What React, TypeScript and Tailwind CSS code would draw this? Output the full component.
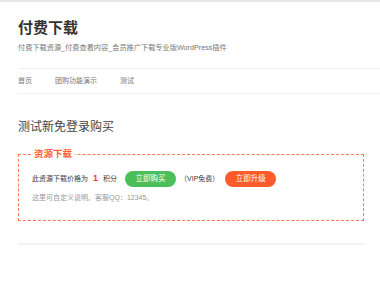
const font = { fontFamily: '"Liberation Sans", "Noto Sans CJK SC", sans-serif' };

const navItems = ["首页", "团购功能演示", "测试"];

const App = () => {
  return (
    <div className="min-h-[282px] w-[380px] overflow-hidden bg-white border-t-2 border-[#e8e8e8]" style={font}>
      {/* Header */}
      <header className="pl-[18px] pt-[16px]">
        <h1 className="text-[15px] leading-[20px] font-bold text-[#333]">付费下载</h1>
        <p className="mt-[4px] text-[7.2px] leading-[12px] text-[#777]">
          付费下载资源_付费查看内容_会员推广下载专业版WordPress插件
        </p>
      </header>

      {/* Nav */}
      <nav className="ml-[18px] mt-[14px] flex h-[26px] items-center border-y border-[#f0f0f0] text-[7px] text-[#777]">
        <a className="w-[37px]">{navItems[0]}</a>
        <a className="w-[65px]">{navItems[1]}</a>
        <a>{navItems[2]}</a>
      </nav>

      {/* Content */}
      <main className="mx-[18px] w-[347px]">
        <h2 className="mt-[24px] text-[12px] leading-[18px] text-[#444]">测试新免登录购买</h2>

        <fieldset className="mt-[12px] w-[346px] border-[1.5px] border-dashed border-[#ff7a50] pl-[13px] pb-[16px]">
          <legend className="-ml-[1px] px-[3px] text-[9.5px] leading-[12px] font-bold text-[#ff5f33]">资源下载</legend>

          <div className="mt-[11px] flex items-center text-[7px] text-[#3a3a3a]">
            <span>此资源下载价格为</span>
            <span className="mx-[5px] text-[9px] font-bold text-[#f33]">1</span>
            <span>积分</span>
            <button className="ml-[8px] h-[16px] w-[51px] rounded-full bg-[#4cbe5a] text-[7.5px] text-white">立即购买</button>
            <span className="ml-[4px]">（VIP免费）</span>
            <button className="ml-[6px] h-[16px] w-[51px] rounded-full bg-[#ff5a2c] text-[7.5px] text-white">立即升级</button>
          </div>

          <p className="mt-[5px] text-[7px] leading-[12px] text-[#999]">这里可自定义说明。客服QQ：12345。</p>
        </fieldset>

        <div className="mt-[22px] h-[2px] bg-[#f3f3f3]" />
      </main>
    </div>
  );
};

export default App;
